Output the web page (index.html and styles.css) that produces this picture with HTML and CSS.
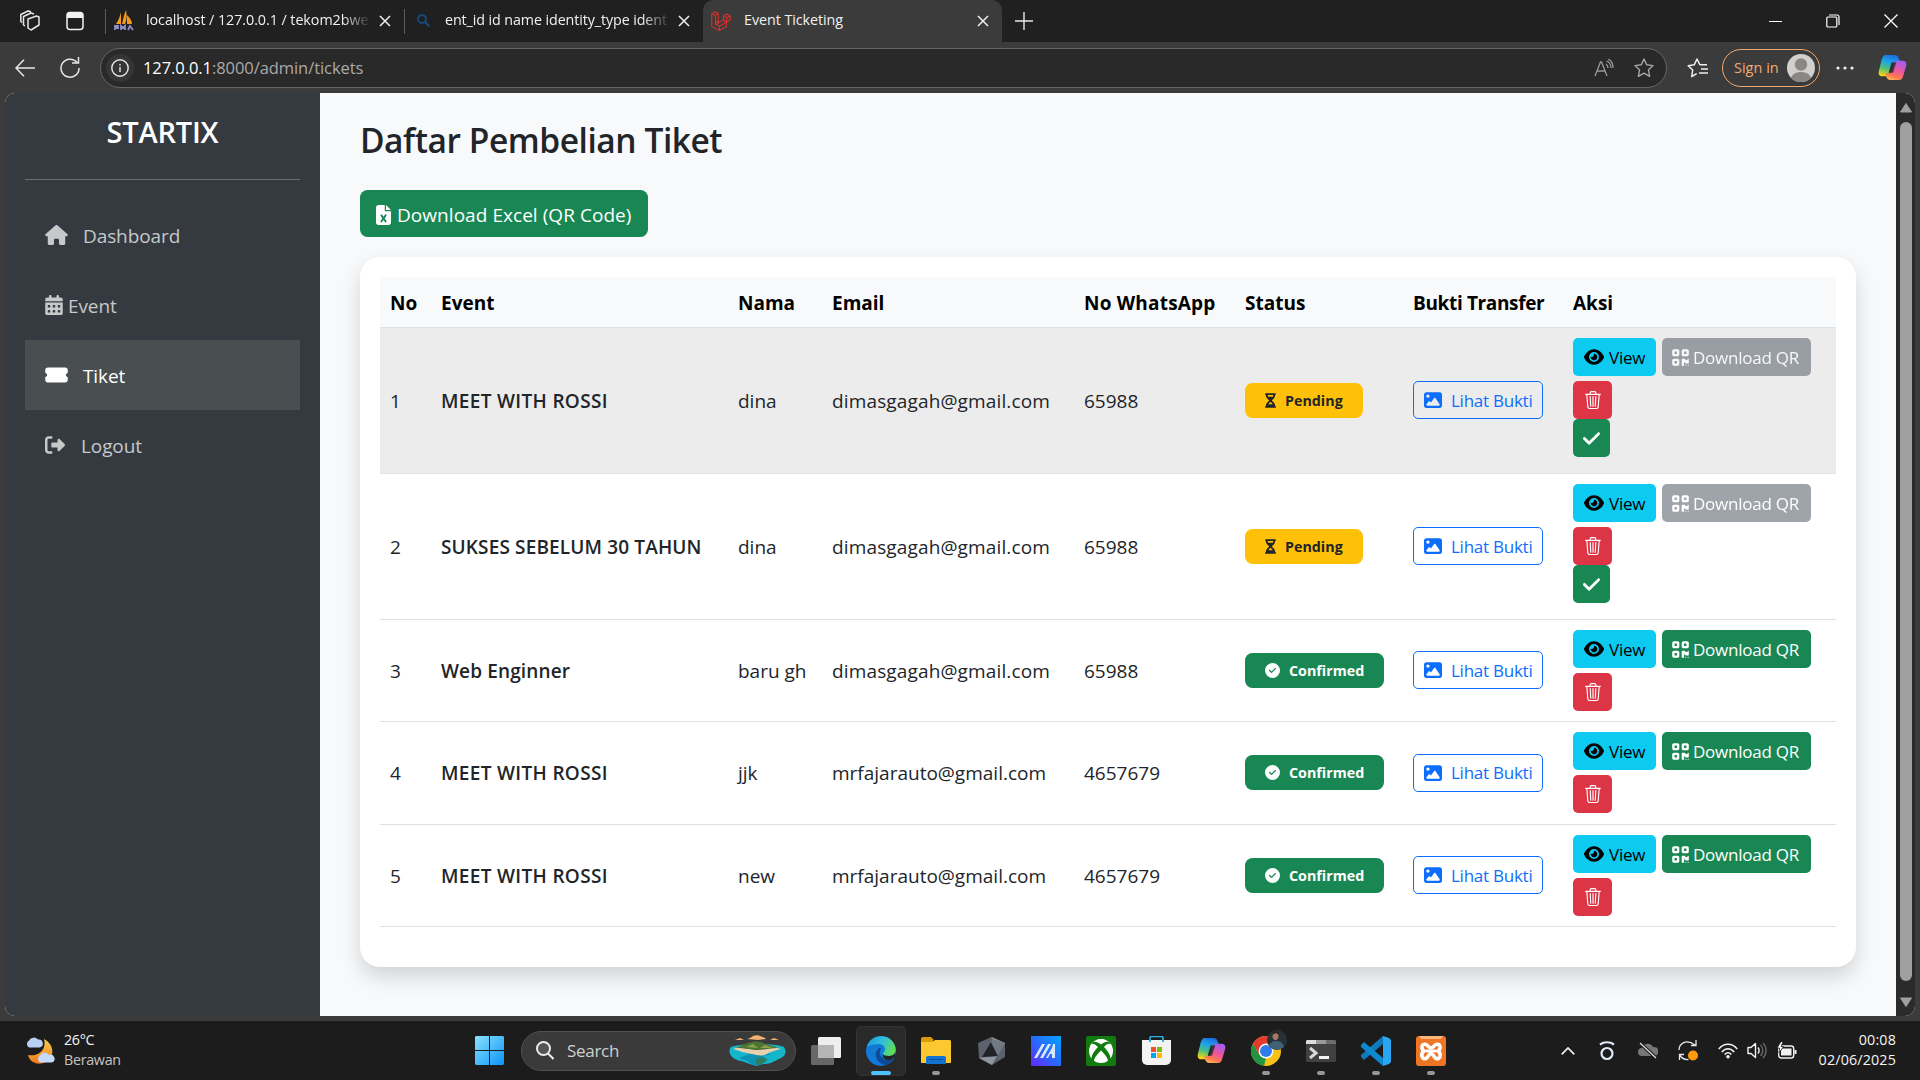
FILE: index.html
```html
<!DOCTYPE html>
<html lang="id">
<head>
<meta charset="utf-8">
<title>Event Ticketing</title>
<link rel="stylesheet" href="styles.css">
</head>
<body>
<svg class="defs" width="0" height="0" aria-hidden="true">
  <symbol id="house" viewBox="0 0 576 512"><path d="M575.8 255.5c0 18-15 32.1-32 32.1h-32l.7 160.2c0 2.7-.2 5.4-.5 8.1V472c0 22.1-17.9 40-40 40H392c-22.1 0-40-17.9-40-40v-88c0-17.7-14.3-32-32-32h-64c-17.7 0-32 14.3-32 32v88c0 22.1-17.9 40-40 40H104c-22.1 0-40-17.9-40-40V287.6H32c-18 0-32-14-32-32.1c0-9 3-17 10-24L266.4 8c7-7 15-8 22-8s15 2 21 7L564.8 231.5c8 7 12 15 11 24z"/></symbol>
  <symbol id="calendar" viewBox="0 0 448 512"><path d="M128 0c17.7 0 32 14.3 32 32V64H288V32c0-17.7 14.3-32 32-32s32 14.3 32 32V64h48c26.5 0 48 21.5 48 48v48H0V112C0 85.5 21.5 64 48 64H96V32c0-17.7 14.3-32 32-32zM0 192H448V464c0 26.5-21.5 48-48 48H48c-26.5 0-48-21.5-48-48V192zm64 80v32c0 8.8 7.2 16 16 16h32c8.8 0 16-7.2 16-16V272c0-8.8-7.2-16-16-16H80c-8.8 0-16 7.2-16 16zm128 0v32c0 8.8 7.2 16 16 16h32c8.8 0 16-7.2 16-16V272c0-8.8-7.2-16-16-16H208c-8.8 0-16 7.2-16 16zm144-16c-8.8 0-16 7.2-16 16v32c0 8.8 7.2 16 16 16h32c8.8 0 16-7.2 16-16V272c0-8.8-7.2-16-16-16H336zM64 400v32c0 8.8 7.2 16 16 16h32c8.8 0 16-7.2 16-16V400c0-8.8-7.2-16-16-16H80c-8.8 0-16 7.2-16 16zm144-16c-8.8 0-16 7.2-16 16v32c0 8.8 7.2 16 16 16h32c8.8 0 16-7.2 16-16V400c0-8.8-7.2-16-16-16H208zm112 16v32c0 8.8 7.2 16 16 16h32c8.8 0 16-7.2 16-16V400c0-8.8-7.2-16-16-16H336c-8.8 0-16 7.2-16 16z"/></symbol>
  <symbol id="ticket" viewBox="0 0 576 512"><path d="M0 128C0 92.7 28.7 64 64 64H512c35.3 0 64 28.7 64 64v64c0 8.8-7.4 15.7-15.7 18.6C541.5 217.1 528 235 528 256s13.5 38.9 32.3 45.4c8.3 2.9 15.7 9.8 15.7 18.6v64c0 35.3-28.7 64-64 64H64c-35.3 0-64-28.7-64-64V320c0-8.8 7.4-15.7 15.7-18.6C34.5 294.9 48 277 48 256s-13.5-38.9-32.3-45.4C7.4 207.7 0 200.8 0 192V128z"/></symbol>
  <symbol id="logout" viewBox="0 0 512 512"><path d="M377.9 105.9L500.7 228.7c7.2 7.2 11.3 17.1 11.3 27.3s-4.1 20.1-11.3 27.3L377.9 406.1c-6.4 6.4-15 9.9-24 9.9c-18.7 0-33.9-15.2-33.9-33.9l0-62.1-128 0c-17.7 0-32-14.3-32-32l0-64c0-17.7 14.3-32 32-32l128 0 0-62.1c0-18.7 15.2-33.9 33.9-33.9c9 0 17.6 3.6 24 9.9zM160 96L96 96c-17.7 0-32 14.3-32 32l0 256c0 17.7 14.3 32 32 32l64 0c17.7 0 32 14.3 32 32s-14.3 32-32 32l-64 0c-53 0-96-43-96-96L0 128C0 75 43 32 96 32l64 0c17.7 0 32 14.3 32 32s-14.3 32-32 32z"/></symbol>
  <symbol id="excel" viewBox="0 0 384 512"><path d="M64 0C28.7 0 0 28.7 0 64V448c0 35.3 28.7 64 64 64H320c35.3 0 64-28.7 64-64V160H256c-17.7 0-32-14.3-32-32V0H64zM256 0V128H384L256 0zM155.7 250.2L192 302.1l36.3-51.9c7.6-10.9 22.6-13.5 33.4-5.9s13.5 22.6 5.9 33.4L221.3 344l46.4 66.2c7.6 10.9 5 25.8-5.9 33.4s-25.8 5-33.4-5.9L192 385.8l-36.3 51.9c-7.6 10.9-22.6 13.5-33.4 5.9s-13.5-22.6-5.9-33.4L162.7 344l-46.4-66.2c-7.6-10.9-5-25.8 5.9-33.4s25.8-5 33.4 5.9z"/></symbol>
  <symbol id="eye" viewBox="0 0 576 512"><path d="M288 32c-80.8 0-145.5 36.8-192.6 80.6C48.6 156 17.3 208 2.5 243.7c-3.3 7.9-3.3 16.7 0 24.6C17.3 304 48.6 356 95.4 399.4C142.5 443.2 207.2 480 288 480s145.5-36.8 192.6-80.6c46.8-43.5 78.1-95.4 93-131.1c3.3-7.9 3.3-16.7 0-24.6c-14.9-35.7-46.2-87.7-93-131.1C433.5 68.8 368.8 32 288 32zM144 256a144 144 0 1 1 288 0 144 144 0 1 1 -288 0zm144-64c0 35.3-28.7 64-64 64c-7.1 0-13.9-1.2-20.3-3.3c-5.5-1.8-11.9 1.6-11.7 7.4c.3 6.9 1.3 13.8 3.2 20.7c13.7 51.2 66.4 81.6 117.6 67.9s81.6-66.4 67.9-117.6c-11.1-41.5-47.8-69.4-88.6-71.1c-5.8-.2-9.2 6.1-7.4 11.7c2.1 6.4 3.3 13.2 3.3 20.3z"/></symbol>
  <symbol id="qr" viewBox="0 0 448 512"><path d="M0 80C0 53.5 21.5 32 48 32h96c26.5 0 48 21.5 48 48v96c0 26.5-21.5 48-48 48H48c-26.5 0-48-21.5-48-48V80zM64 96v64h64V96H64zM0 336c0-26.5 21.5-48 48-48h96c26.5 0 48 21.5 48 48v96c0 26.5-21.5 48-48 48H48c-26.5 0-48-21.5-48-48V336zm64 16v64h64V352H64zM304 32h96c26.5 0 48 21.5 48 48v96c0 26.5-21.5 48-48 48H304c-26.5 0-48-21.5-48-48V80c0-26.5 21.5-48 48-48zm80 64H320v64h64V96zM256 304c0-8.8 7.2-16 16-16h64c8.8 0 16 7.2 16 16s7.2 16 16 16h32c8.8 0 16-7.2 16-16s7.2-16 16-16s16 7.2 16 16v96c0 8.8-7.2 16-16 16H368c-8.8 0-16-7.2-16-16s-7.2-16-16-16s-16 7.2-16 16v64c0 8.8-7.2 16-16 16H272c-8.8 0-16-7.2-16-16V304zM368 480a16 16 0 1 1 0-32 16 16 0 1 1 0 32zm64 0a16 16 0 1 1 0-32 16 16 0 1 1 0 32z"/></symbol>
  <symbol id="check" viewBox="0 0 448 512"><path stroke="currentColor" stroke-width="18" d="M438.6 105.4c12.5 12.5 12.5 32.8 0 45.3l-256 256c-12.5 12.5-32.8 12.5-45.3 0l-128-128c-12.5-12.5-12.5-32.8 0-45.3s32.8-12.5 45.3 0L160 338.7 393.4 105.4c12.5-12.5 32.8-12.5 45.3 0z"/></symbol>
  <symbol id="circle-check" viewBox="0 0 512 512"><path d="M256 512A256 256 0 1 0 256 0a256 256 0 1 0 0 512zM369 209L241 337c-9.4 9.4-24.6 9.4-33.9 0l-64-64c-9.4-9.4-9.4-24.6 0-33.9s24.6-9.4 33.9 0l47 47L335 175c9.4-9.4 24.6-9.4 33.9 0s9.4 24.6 0 33.9z"/></symbol>
  <symbol id="hourglass" viewBox="0 0 384 512"><path fill-rule="evenodd" d="M32 0C14 0 0 14 0 32s14 32 32 32v11c0 42 17 83 47 113l68 68-68 68c-30 30-47 71-47 113v11c-18 0-32 14-32 32s14 32 32 32h320c18 0 32-14 32-32s-14-32-32-32v-11c0-42-17-83-47-113l-68-68 68-68c30-30 47-71 47-113V64c18 0 32-14 32-32S370 0 352 0zM96 75V64h192v11c0 19-6 37-16 53H112c-10-16-16-34-16-53zm16 309c4-5 8-10 13-15l67-68 67 68c5 5 10 10 13 15z"/></symbol>
  <symbol id="image" viewBox="0 0 512 448"><path fill-rule="evenodd" d="M64 0C29 0 0 29 0 64v320c0 35 29 64 64 64h384c35 0 64-29 64-64V64c0-35-29-64-64-64zM112 64a48 48 0 1 1 0 96 48 48 0 0 1 0-96zm212 106c-5-7-12-10-20-10s-16 4-20 11l-87 127-26-33c-5-6-12-9-19-9s-14 3-19 9l-64 80c-5 7-6 16-2 24s12 15 21 15h336c9 0 17-5 21-13s4-17-1-25z"/></symbol>
  <symbol id="trash" viewBox="0 0 16 16"><path d="M6.5 1h3a.5.5 0 0 1 .5.5v1H6v-1a.5.5 0 0 1 .5-.5M11 2.5v-1A1.5 1.5 0 0 0 9.5 0h-3A1.5 1.5 0 0 0 5 1.5v1H1.500a.5.5 0 0 0 0 1h.538l.853 10.66A2 2 0 0 0 4.885 16h6.23a2 2 0 0 0 1.994-1.84l.853-10.66h.538a.5.5 0 0 0 0-1zm1.958 1-.846 10.58a1 1 0 0 1-.997.92h-6.23a1 1 0 0 1-.997-.92L3.042 3.5zm-7.487 1a.5.5 0 0 1 .528.47l.5 8.5a.5.5 0 0 1-.998.06L5 5.03a.5.5 0 0 1 .47-.53Zm5.058 0a.5.5 0 0 1 .47.53l-.5 8.5a.5.5 0 1 1-.998-.06l.5-8.5a.5.5 0 0 1 .528-.47M8 4.5a.5.5 0 0 1 .5.5v8.5a.5.5 0 0 1-1 0V5a.5.5 0 0 1 .5-.5"/></symbol>
  <symbol id="x" viewBox="0 0 12 12"><path d="M1 1l10 10M11 1L1 11" fill="none" stroke="currentColor" stroke-width="1.5"/></symbol>
  <symbol id="copilot" viewBox="0 0 30 28">
    <path d="M8 1h9c3 0 4 2 5 5l1 3h-5c-3 0-4 2-5 5l-2 7c-.6 2-1 2-2 2H4c-3 0-4-3-3-6L4 5c.7-2 2-4 4-4z" fill="url(#cpA)"/>
    <path d="M22 27h-9c-3 0-4-2-5-5l-.6-2H11c2 0 3-2 4-5l2-6c.7-2 2-2 3-2h6c3 0 4 3 3 6l-3 10c-.7 2-2 4-4 4z" fill="url(#cpB)"/>
    <path d="M14 8.500h5l-3.500 11h-4.500z" fill="#2a2a2c" opacity=".8"/>
  </symbol>
  <linearGradient id="cpA" x1=".6" y1="0" x2=".3" y2="1"><stop offset="0" stop-color="#1b6fe0"/><stop offset=".35" stop-color="#1fa5e8"/><stop offset=".65" stop-color="#4cc27a"/><stop offset="1" stop-color="#f5d415"/></linearGradient>
  <linearGradient id="cpB" x1=".7" y1="0" x2=".3" y2="1"><stop offset="0" stop-color="#a35cf0"/><stop offset=".5" stop-color="#f0569a"/><stop offset=".8" stop-color="#ff7a4c"/><stop offset="1" stop-color="#ffb357"/></linearGradient>
</svg>

<header class="titlebar">
  <svg class="t-work" width="20" height="22" viewBox="0 0 20 22" fill="none" stroke="#e6e6e6" stroke-width="1.500" stroke-linejoin="round"><path d="M8 9l8.500-3 2.500 1v8l-8 5-3-2zM5 16l-1.500-1V6.500L11 3l3 1M2 12.500L.8 11.500V4.500L8 1l3 .8"/></svg>
  <svg class="t-vert" width="18" height="20" viewBox="0 0 18 20"><rect x="1" y="1.500" width="16" height="17" rx="3" fill="none" stroke="#f2f2f2" stroke-width="1.500"/><path d="M1 7V4a3 3 0 0 1 3-3h10a3 3 0 0 1 3 3v3z" fill="#f2f2f2"/></svg>
  <i class="t-sep"></i>
  <div class="tab tab-one">
    <svg width="21" height="22" viewBox="0 0 21 22"><path d="M7 2v12H2C4 11 6 7 7 2zM12 0c1 5 1 10-1 14H8c1-5 2-9 4-14zM13 5c3 3 5 6 5 9h-5z" fill="#f39a1e"/><path d="M1 20v-4h3v2H1M7 20v-4l2 2 2-2v4M14 20l2-4 3 4" fill="none" stroke="#8d8fc6" stroke-width="1.800"/></svg>
    <span class="tab-label fade">localhost / 127.0.0.1 / tekom2bwe</span>
    <svg class="x" width="12" height="12"><use href="#x"/></svg>
  </div>
  <i class="t-sep"></i>
  <div class="tab tab-two">
    <svg width="13" height="13" viewBox="0 0 13 13" fill="none" stroke="#174a7c" stroke-width="2"><circle cx="5" cy="5" r="4"/><path d="M8 8l4.500 4.500"/></svg>
    <span class="tab-label fade">ent_id id name identity_type ident</span>
    <svg class="x" width="12" height="12"><use href="#x"/></svg>
  </div>
  <div class="tab tab-active">
    <svg width="20" height="20" viewBox="0 0 20 20" fill="none" stroke="#d5302a" stroke-width="1.100" stroke-linejoin="round"><path d="M.8 2.500L4 .7l3.300 1.800v9L4 9.800M.8 2.500L4 4.300l3.300-1.800M.8 2.500v13L8.500 19.400l7-4V11l3.700-2V5L15.700 3 12.500 5v4l-8 4.500V4.300M12.500 5l3.200 1.800L19.200 5M15.700 6.800V11l-3.200-2M15.500 11l-7 4.200v4.200M8.500 15.200l-4-2"/></svg>
    <span class="tab-label">Event Ticketing</span>
    <svg class="x" width="12" height="12"><use href="#x"/></svg>
  </div>
  <svg class="t-plus" width="18" height="18" viewBox="0 0 18 18" stroke="#e8e8e8" stroke-width="1.400"><path d="M9 0v18M0 9h18"/></svg>
  <div class="win-ctl">
    <svg width="13" height="13" viewBox="0 0 13 13" stroke="#fff"><path d="M0 6.500h13"/></svg>
    <svg width="14" height="14" viewBox="0 0 14 14" fill="none" stroke="#fff" stroke-width="1.200"><rect x=".8" y="3" width="10" height="10" rx="1"/><path d="M3 1h8a2 2 0 0 1 2 2v8"/></svg>
    <svg width="14" height="14" viewBox="0 0 14 14" stroke="#fff" stroke-width="1.300"><path d="M.5.5l13 13M13.500.5l-13 13"/></svg>
  </div>
</header>

<div class="toolbar">
  <svg width="20" height="18" viewBox="0 0 20 18" fill="none" stroke="#e8e8e8" stroke-width="1.500"><path d="M9 .8L1 9l8 8.200M1 9h19"/></svg>
  <svg class="tb-reload" width="20" height="21" viewBox="0 0 20 21" fill="none" stroke="#e8e8e8" stroke-width="1.500"><path d="M17 5.500A9 9 0 1 0 19 11M18.500 0v6H12"/></svg>
  <div class="urlbar">
    <span class="info"><svg width="18" height="18" viewBox="0 0 18 18"><circle cx="9" cy="9" r="8.200" fill="none" stroke="#e8e8e8" stroke-width="1.400"/><path d="M9 8v5M9 5v1.500" stroke="#e8e8e8" stroke-width="1.400"/></svg></span>
    <span class="url"><b>127.0.0.1</b>:8000/admin/tickets</span>
    <svg width="20" height="18" viewBox="0 0 20 18" fill="none" stroke="#999" stroke-width="1.300"><path d="M1 17L6.500 3h1L13 17M3 12h8M12 5c1.500 1 2 2.500 2 4M12.500 2C15.500 3 17 6 17 9M14 0c3.500 1.500 5 5 5 9"/></svg>
    <svg class="tb-star" width="20" height="20" viewBox="0 0 20 20" fill="none" stroke="#a5a5a5" stroke-width="1.400" stroke-linejoin="round"><path d="M10 1l2.700 5.800 6.300.8-4.600 4.300 1.200 6.400L10 15.200l-5.600 3.100 1.200-6.400L1 7.600l6.300-.8z"/></svg>
  </div>
  <svg class="tb-fav" width="21" height="20" viewBox="0 0 21 20" fill="none" stroke="#f0f0f0" stroke-width="1.500" stroke-linejoin="round"><path d="M13 7l-3-6-2.800 5.800-6 .9 4.500 4.300-1 6.500 5-2.800M13 6.800h7M14 11h7M12 15h9"/></svg>
  <div class="signin"><span>Sign in</span>
    <svg width="28" height="28" viewBox="0 0 28 28"><circle cx="14" cy="14" r="14" fill="#d2d0ce"/><circle cx="14" cy="10.500" r="6.200" fill="#8a8886"/><path d="M4 24c2-8 18-8 20 0a14 14 0 0 1-20 0z" fill="#8a8886"/></svg></div>
  <svg class="tb-dots" width="18" height="4" viewBox="0 0 18 4"><circle cx="2" cy="2" r="1.600"/><circle cx="9" cy="2" r="1.600"/><circle cx="16" cy="2" r="1.600"/></svg>
  <svg class="tb-copilot" width="29" height="27"><use href="#copilot"/></svg>
</div>

<div class="viewport">
  <aside class="sidebar">
    <h2 class="brand">STARTIX</h2>
    <nav class="menu">
      <a class="item"><svg width="23" height="20"><use href="#house"/></svg><span>Dashboard</span></a>
      <a class="item item-event"><svg width="18" height="20"><use href="#calendar"/></svg><span>Event</span></a>
      <a class="item active"><svg width="23" height="20"><use href="#ticket"/></svg><span>Tiket</span></a>
      <a class="item item-out"><svg width="20" height="20"><use href="#logout"/></svg><span>Logout</span></a>
    </nav>
  </aside>
  <main class="content">
    <h1 class="title">Daftar Pembelian Tiket</h1>
    <a class="btn-excel"><svg width="15" height="20"><use href="#excel"/></svg><span>Download Excel (QR Code)</span></a>
    <section class="card">
      <table class="tickets">
        <colgroup><col class="c-no"><col class="c-event"><col class="c-nama"><col class="c-email"><col class="c-wa"><col class="c-status"><col class="c-bukti"><col></colgroup>
        <thead><tr><th>No</th><th>Event</th><th>Nama</th><th>Email</th><th class="th-wa">No WhatsApp</th><th>Status</th><th class="th-bukti">Bukti Transfer</th><th>Aksi</th></tr></thead>
        <tbody>
          <tr class="tall hover"><td>1</td><td class="ev">MEET WITH ROSSI</td><td>dina</td><td class="em">dimasgagah@gmail.com</td><td>65988</td>
            <td><span class="badge pending"><svg width="11" height="15"><use href="#hourglass"/></svg>Pending</span></td>
            <td><a class="btn proof"><svg width="18" height="16"><use href="#image"/></svg>Lihat Bukti</a></td>
            <td><div class="acts"><a class="btn view"><svg width="20" height="18"><use href="#eye"/></svg>View</a><a class="btn qr off"><svg width="17" height="19"><use href="#qr"/></svg>Download QR</a><a class="btn del"><svg width="18" height="18"><use href="#trash"/></svg></a></div><a class="btn ok"><svg width="17" height="19"><use href="#check"/></svg></a></td></tr>
          <tr class="tall"><td>2</td><td class="ev ev-long">SUKSES SEBELUM 30 TAHUN</td><td>dina</td><td class="em">dimasgagah@gmail.com</td><td>65988</td>
            <td><span class="badge pending"><svg width="11" height="15"><use href="#hourglass"/></svg>Pending</span></td>
            <td><a class="btn proof"><svg width="18" height="16"><use href="#image"/></svg>Lihat Bukti</a></td>
            <td><div class="acts"><a class="btn view"><svg width="20" height="18"><use href="#eye"/></svg>View</a><a class="btn qr off"><svg width="17" height="19"><use href="#qr"/></svg>Download QR</a><a class="btn del"><svg width="18" height="18"><use href="#trash"/></svg></a></div><a class="btn ok"><svg width="17" height="19"><use href="#check"/></svg></a></td></tr>
          <tr><td>3</td><td class="ev ev-long">Web Enginner</td><td>baru gh</td><td class="em">dimasgagah@gmail.com</td><td>65988</td>
            <td><span class="badge confirmed"><svg width="15" height="15"><use href="#circle-check"/></svg>Confirmed</span></td>
            <td><a class="btn proof"><svg width="18" height="16"><use href="#image"/></svg>Lihat Bukti</a></td>
            <td><div class="acts"><a class="btn view"><svg width="20" height="18"><use href="#eye"/></svg>View</a><a class="btn qr"><svg width="17" height="19"><use href="#qr"/></svg>Download QR</a><a class="btn del"><svg width="18" height="18"><use href="#trash"/></svg></a></div></td></tr>
          <tr class="plus"><td>4</td><td class="ev">MEET WITH ROSSI</td><td>jjk</td><td>mrfajarauto@gmail.com</td><td>4657679</td>
            <td><span class="badge confirmed"><svg width="15" height="15"><use href="#circle-check"/></svg>Confirmed</span></td>
            <td><a class="btn proof"><svg width="18" height="16"><use href="#image"/></svg>Lihat Bukti</a></td>
            <td><div class="acts"><a class="btn view"><svg width="20" height="18"><use href="#eye"/></svg>View</a><a class="btn qr"><svg width="17" height="19"><use href="#qr"/></svg>Download QR</a><a class="btn del"><svg width="18" height="18"><use href="#trash"/></svg></a></div></td></tr>
          <tr><td>5</td><td class="ev">MEET WITH ROSSI</td><td>new</td><td>mrfajarauto@gmail.com</td><td>4657679</td>
            <td><span class="badge confirmed"><svg width="15" height="15"><use href="#circle-check"/></svg>Confirmed</span></td>
            <td><a class="btn proof"><svg width="18" height="16"><use href="#image"/></svg>Lihat Bukti</a></td>
            <td><div class="acts"><a class="btn view"><svg width="20" height="18"><use href="#eye"/></svg>View</a><a class="btn qr"><svg width="17" height="19"><use href="#qr"/></svg>Download QR</a><a class="btn del"><svg width="18" height="18"><use href="#trash"/></svg></a></div></td></tr>
        </tbody>
      </table>
    </section>
  </main>
  <div class="scroll">
    <svg width="12" height="10" viewBox="0 0 12 10"><path d="M6 .5L11.500 9h-11z" fill="#9f9f9f" stroke="#9f9f9f" stroke-linejoin="round"/></svg>
    <i class="thumb"></i>
    <svg width="12" height="10" viewBox="0 0 12 10"><path d="M6 9.500L11.500 1h-11z" fill="#9f9f9f" stroke="#9f9f9f" stroke-linejoin="round"/></svg>
  </div>
</div>

<footer class="taskbar">
  <div class="weather">
    <svg width="30" height="28" viewBox="0 0 30 28"><defs><linearGradient id="moon" x1="0" y1="0" x2="0" y2="1"><stop offset="0" stop-color="#f8cf4a"/><stop offset="1" stop-color="#f07a1c"/></linearGradient></defs><path d="M19 3c12 6 11 22-3 24.500-6 1-12-3-13-8.500 10 2 19-5 16-16z" fill="url(#moon)"/><path d="M4 11.500a4 4 0 0 1 0-7 5.500 5.500 0 0 1 9-1 4 4 0 0 1 1.500 8z" fill="#b9cff5"/><path d="M15 26.500a4 4 0 0 1 0-7 5 5 0 0 1 9-.5 4 4 0 0 1 3 7.500z" fill="#c5dafb"/></svg>
    <div class="two"><span>26°C</span><span class="dim">Berawan</span></div>
  </div>
  <div class="apps">
    <svg class="start" width="29" height="29" viewBox="0 0 29 29"><defs><linearGradient id="win" x1="0" y1="0" x2="1" y2="1"><stop offset="0" stop-color="#8ae2fb"/><stop offset="1" stop-color="#0b94fa"/></linearGradient></defs><path d="M1 0h13v14H0V1zM15 0h13l1 1v13H15zM0 15h14v14H1l-1-1zM15 15h14v13l-1 1H15z" fill="url(#win)"/></svg>
    <div class="search">
      <svg width="18" height="19" viewBox="0 0 18 19" stroke="#ececec" stroke-width="2"><circle cx="7.500" cy="7.500" r="6.500" fill="#555"/><path d="M12 12.500l5.500 5.500"/></svg>
      <span>Search</span>
      <svg class="island" width="57" height="32" viewBox="0 0 57 32"><path d="M2 12c10-4 43-4 53 0 3 5 2 9-5 12-5 2-8 5-14 5-5 0-7 3-12 1-5-1-7-3-12-4C2 24-2 17 2 12z" fill="#15b5cc"/><path d="M10 23l8 3 6 4h6l7-3-2-6 8-2H20z" fill="#0c93b4"/><path d="M4 14c6-2 12-4 17-5l5-1 8 1c6 2 12 3 18 5-7 2-12 3-16 6-5 1-9 0-13-1-7-1-12-3-19-5z" fill="#e9cfae"/><path d="M7 13c6-3 10-5 16-6 5-1 10 0 14 2 4 1 8 2 12 4-8 0-13 2-20 2S16 13 7 13z" fill="#4d7434"/><path d="M17 12l7-3 5 4zM31 13l5-3 8 3z" fill="#8aa34a"/><path d="M18 4l3-1 3-2c2-1 6-1 7 0l5 2 1 1-8 1zM6 5l5-2 4 2zM41 5l4-2 5 2z" fill="#f1b273"/><path d="M26 25l5-3 8 2-6 5-5 1z" fill="#2f7a63"/></svg>
    </div>
    <span class="app"><svg width="30" height="28" viewBox="0 0 30 28"><rect x="7" y="0" width="23" height="21" rx="1.500" fill="#eee"/><rect x="0" y="8" width="23" height="20" rx="1.500" fill="#707070" opacity=".9"/><path d="M7 8h16v13H7z" fill="#b5b5b5"/></svg></span>
    <span class="app app-on"><svg width="30" height="30" viewBox="0 0 30 30"><defs><linearGradient id="e1" x1="0" y1=".2" x2="1" y2=".6"><stop offset="0" stop-color="#1c9be0"/><stop offset=".5" stop-color="#2fc0dc"/><stop offset="1" stop-color="#62e04e"/></linearGradient></defs><circle cx="15" cy="15" r="15" fill="#1279d6"/><path d="M1 11C4-2 24-4 29 10c2 6-1 10-6 10-4 0-6-1-6-2 0-2 2-2 2-5 0-2-2-5-6-5C8 8 4 9 1 11z" fill="url(#e1)"/><path d="M13 12c-7 6-2 16 7 17 3-1 6-3 8-6-6 3-13 0-14-5-1-3 1-4 1-6z" fill="#0c4c97"/><path d="M17 18c0 1 2 2 6 2 3 0 5-1 6.500-4l-.5 5-4 3c-5 1-9-2-8-6z" fill="#232526"/></svg><i class="run wide"></i></span>
    <span class="app"><svg width="30" height="27" viewBox="0 0 30 27"><path d="M0 2a2 2 0 0 1 2-2h8l3 3h-1v5H0z" fill="#dc9a08"/><path d="M0 5h11l3-2h15l1 1v22H0z" fill="#fcc82f"/><path d="M5 27v-6a2 2 0 0 1 2-2h16a2 2 0 0 1 2 2v6z" fill="#1173cf"/><path d="M8.500 22.500h13" stroke="#0a4f9c"/></svg><i class="run"></i></span>
    <span class="app"><svg width="27" height="28" viewBox="0 0 27 28"><path d="M13.500 0L27 6v14l-13 8L1 21 0 6z" fill="#5b626b"/><path d="M13.500 0L27 6l-9 4zM1 21l13 7 5-9z" fill="#8e969f"/><path d="M13 5l7 14-16 1z" fill="#202328"/><path d="M13 5l7 14 7-13-12-4z" fill="#717982"/></svg></span>
    <span class="app"><svg width="30" height="30" viewBox="0 0 30 30"><defs><linearGradient id="ma" x1="1" y1="0" x2="0" y2="1"><stop offset="0" stop-color="#04a2ff"/><stop offset=".5" stop-color="#286cfa"/><stop offset="1" stop-color="#6523ff"/></linearGradient></defs><path d="M0 0h30v30H0z" fill="url(#ma)"/><path d="M3 22l8-14h3L6 22zM9 22l8-14h3l-8 14zM15 22l6-10 1-4h2v14h-3v-4h-2l-2 4z" fill="#dbe9ff"/></svg></span>
    <span class="app"><svg width="30" height="30" viewBox="0 0 30 30"><rect width="30" height="30" rx="2" fill="#107c10"/><circle cx="15" cy="15" r="12" fill="#fff"/><path d="M7 6c3-1 6 1 8 2.500C17 7 20 5 23 6l2 2c-2-1-5 0-7 3 4 4 7 9 6.500 12.500L22 25.500c0-4-4-8-7-11-3 3-7 7-7 11l-2.500-2C5 20 8 15 12 11 9 8 7 7 5 8z" fill="#107c10"/><path d="M10 4.500c2 0 4 1 5 1.800 1-.8 3-1.800 5-1.800-3-2-7-2-10 0z" fill="#fff"/></svg></span>
    <span class="app"><svg width="29" height="29" viewBox="0 0 29 29"><path d="M8 6V2a1.500 1.500 0 0 1 1.500-1.500h10A1.500 1.500 0 0 1 21 2v4" fill="none" stroke="#28b3e4" stroke-width="1.600"/><path d="M0 4h29v20a5 5 0 0 1-5 5H5a5 5 0 0 1-5-5z" fill="#f3f3f3"/><path d="M7 4h2v2H7zM20 4h2v2h-2z" fill="#28b3e4"/><path d="M9 11h5v5H9z" fill="#f25022"/><path d="M15 11h5v5h-5z" fill="#7fba00"/><path d="M9 17h5v5H9z" fill="#00a4ef"/><path d="M15 17h5v5h-5z" fill="#ffb900"/></svg></span>
    <span class="app"><svg width="29" height="27"><use href="#copilot"/></svg></span>
    <span class="app"><svg class="chrome" width="36" height="36" viewBox="0 0 36 36"><circle cx="15" cy="21" r="15" fill="#fbc116"/><path d="M2 13.500L8.500 25l6.500 3-2 8A15 15 0 0 1 2 13.500z" fill="#229342"/><path d="M2 13.500A15 15 0 0 1 28 13.500H15L8.500 25z" fill="#e33b2e"/><circle cx="15" cy="21" r="7.400" fill="#fff"/><circle cx="15" cy="21" r="6" fill="#2f7bea"/><circle cx="26" cy="10" r="10" fill="#273238"/><path d="M18 15c3-4 5-4 8-4s6 2 7 6a10 10 0 0 1-14 0z" fill="#3f6279"/><ellipse cx="24.500" cy="6" rx="3" ry="4" fill="#a87862"/><path d="M21 5c1-5 7-5 7 0l-3-2z" fill="#2a1f1c"/></svg><i class="run"></i></span>
    <span class="app"><svg width="30" height="22" viewBox="0 0 30 22"><rect width="30" height="22" rx="1.500" fill="#414141"/><path d="M1 0h9v4H0V1z" fill="#ddd"/><path d="M10 0h10v4H10z" fill="#9a9a9a"/><path d="M20 0h9l1 1v3H20z" fill="#6d6d6d"/><path d="M4 8l6 5-6 5" fill="none" stroke="#d8d8d8" stroke-width="3"/><path d="M13 17.500h10" stroke="#f2f2f2" stroke-width="3"/></svg><i class="run"></i></span>
    <span class="app"><svg width="30" height="30" viewBox="0 0 30 30"><path d="M22 8L3 24l-3-3v-2L22 0z" fill="#1079bd"/><path d="M22 22L3 6 0 9v2l22 19z" fill="#0d89d1"/><path d="M22 0l6 2 2 2v22l-2 2-6 2z" fill="#2aa5f2"/></svg><i class="run"></i></span>
    <span class="app"><svg width="30" height="30" viewBox="0 0 30 30"><rect width="30" height="30" rx="3" fill="#ee7524"/><path d="M3 0h24l-2 3H5z" fill="#f9b77c"/><path d="M10 8.500C5 7 5 13 8 15c-4 3-2 9 2 7.500 2-1 3-5 5-5s3 4 5 5c4 1.500 6-4.500 2-7.500 3-2 3-8-2-6.500-2 1-3 3.500-5 3.500S12 9.500 10 8.500z" fill="none" stroke="#fff" stroke-width="3.600"/><path d="M10 15h10" stroke="#fff" stroke-width="3"/></svg><i class="run"></i></span>
  </div>
  <div class="tray">
    <svg width="14" height="8" viewBox="0 0 14 8" fill="none" stroke="#f2f2f2" stroke-width="1.700"><path d="M.7 7.300L7 1l6.300 6.300"/></svg>
    <svg class="tr-o" width="18" height="20" viewBox="0 0 18 20" fill="none" stroke="#dfe9f8" stroke-width="2.200"><circle cx="9" cy="12.500" r="5.500"/><path d="M2 3.500c4-3 10-3 14 0"/></svg>
    <svg class="tr-cloud" width="20" height="17" viewBox="0 0 20 17"><path d="M4 14a4 4 0 0 1 0-8 6 6 0 0 1 11-1 4.500 4.500 0 0 1 2 9z" fill="#777"/><path d="M2 1l16 15" stroke="#1c1c1c" stroke-width="3.500"/><path d="M2 1l16 15" stroke="#ddd" stroke-width="1.300"/></svg>
    <svg class="tr-sync" width="21" height="21" viewBox="0 0 21 21" fill="none" stroke="#e8e8e8" stroke-width="1.300"><path d="M1 10C1 4 8-2 17 5M18 0v5.500h-5M6 14.500H1.500V20M1.500 15c3 4 6 5 9 4.500"/><circle cx="15" cy="15.500" r="5" fill="#ff9a0c" stroke="none"/></svg>
    <svg class="tr-wifi" width="20" height="16" viewBox="0 0 20 16" fill="none" stroke="#f2f2f2" stroke-width="1.600"><path d="M.8 6C6-.3 14-.3 19.200 6M3.800 9c3.600-4.300 8.800-4.300 12.400 0M6.700 11.500c2-2.300 4.600-2.300 6.600 0"/><circle cx="10" cy="13.700" r="1.800" fill="#f2f2f2" stroke="none"/></svg>
    <svg class="tr-vol" width="20" height="17" viewBox="0 0 20 17" fill="none" stroke="#f2f2f2" stroke-width="1.400" stroke-linejoin="round"><path d="M1 5.500v6h3l4.500 4v-14l-4.500 4zM11 5.500c1.500 2 1.500 4 0 6"/><path d="M13.500 3c3 3 3 8 0 11M16 1c4 4 4 11 0 15" stroke="#666"/></svg>
    <svg class="tr-bat" width="20" height="17" viewBox="0 0 20 17"><rect x="1.700" y="4" width="15" height="12" rx="2.500" fill="none" stroke="#f2f2f2" stroke-width="1.400"/><rect x="4" y="6.500" width="10.500" height="7" fill="#f2f2f2"/><path d="M17.500 8h2v4h-2z" fill="#f2f2f2"/><path d="M4-.5L0 6h2.500L2 11l4.500-6.500H4.200L6-.5z" fill="#fff" stroke="#1c1c1c" stroke-width=".8"/></svg>
    <div class="two clock"><span>00:08</span><span>02/06/2025</span></div>
  </div>
</footer>
</body>
</html>
```
FILE: styles.css
```css
* { box-sizing: border-box; }
body {
  margin: 0; width: 1920px; height: 1080px; overflow: hidden;
  display: flex; flex-direction: column;
  background: #3b3b3b; color: #212529;
  font-family: "Open Sans", "Noto Sans", sans-serif; font-size: 19px;
}
.defs { display: block; width: 0; height: 0; position: absolute; }
svg { flex: none; display: block; fill: currentColor; }
svg[fill="none"] { fill: none; }
h1, h2 { margin: 0; }

/* browser title bar */
.titlebar { flex: none; height: 42px; background: #202020; color: #f0f0f0; display: flex; align-items: center; font-size: 14.3px; }
.t-work { margin-left: 20px; }
.t-vert { margin-left: 26px; }
.t-sep { width: 1px; height: 25px; background: #5c5c5c; margin-left: 21px; }
.tab { display: flex; align-items: center; height: 42px; padding-bottom: 1px; }
.tab-label { white-space: nowrap; overflow: hidden; line-height: 24px; padding-bottom: 2px; }
.tab-one { width: 298px; padding-left: 8px; }
.tab-one .tab-label { width: 223px; margin-left: 11px; letter-spacing: -.05px; }
.tab-two { width: 298px; padding-left: 12px; }
.tab-two .tab-label { width: 224px; margin-left: 15px; letter-spacing: -.1px; }
.tab-one + .t-sep { margin-left: 0; }
.fade { -webkit-mask-image: linear-gradient(90deg, #000 88%, transparent 101%); mask-image: linear-gradient(90deg, #000 88%, transparent 101%); }
.tab .x { margin-left: 10px; }
.tab-two .x { margin-left: 9px; }
.tab-active { width: 299px; padding-left: 8px; background: #3b3b3b; border-radius: 10px 10px 0 0; }
.tab-active .tab-label { margin-left: 13px; width: 223px; letter-spacing: -.05px; }
.t-plus { margin-left: 13px; }
.win-ctl { margin-left: auto; display: flex; align-items: center; gap: 44px; padding-right: 22px; }

/* browser address bar */
.toolbar { flex: none; height: 51px; display: flex; align-items: center; padding-left: 15px; }
.tb-reload { margin-left: 25px; }
.urlbar { margin-left: 20px; width: 1567px; height: 40px; border: 1px solid #666; border-radius: 20px; background: #292929; display: flex; align-items: center; padding: 0 12px 0 5px; color: #a9a9a9; }
.info { width: 28px; height: 28px; border-radius: 50%; background: #353535; display: grid; place-items: center; }
.url { flex: 1; margin-left: 9px; font-size: 16.5px; letter-spacing: -.07px; }
.url b { font-weight: 400; color: #fff; }
.tb-star { margin-left: 20px; }
.tb-fav { margin-left: 20px; }
.signin { margin-left: 14px; width: 98px; height: 38px; border: 1.500px solid #f0a870; border-radius: 19px; display: flex; align-items: center; justify-content: space-between; padding: 0 4px 0 11px; color: #f5a970; font-size: 14.5px; white-space: nowrap; }
.tb-dots { margin-left: 16px; color: #f0f0f0; }
.tb-copilot { margin-left: 24px; }

/* page */
.viewport { flex: none; height: 923px; margin-left: 5px; width: 1910px; display: flex; border-radius: 10px; overflow: hidden; background: #f8f9fa; }
.sidebar { width: 315px; padding: 0 20px; background: #343a40; color: #c6c8ca; }
.brand { height: 87px; padding-top: 17px; line-height: 44px; text-align: center; color: #fff; font-size: 29px; font-weight: 600; letter-spacing: -.2px; border-bottom: 1px solid #6a6f70; }
.menu { margin-top: 20px; }
.item { display: flex; align-items: center; height: 70px; padding-left: 20px; }
.item span { margin-left: 15px; padding-top: 2px; letter-spacing: -.1px; }
.item.item-event span { margin-left: 5px; }
.item-out span { margin-left: 16px; }
.item.active { background: #494e51; color: #fff; }
.content { flex: 1; padding: 24px 40px 0; }
.title { height: 45px; line-height: 46px; font-size: 33.5px; font-weight: 600; letter-spacing: -.45px; white-space: nowrap; }
.btn-excel { display: flex; align-items: center; gap: 6px; margin-top: 28px; width: 288px; height: 47px; padding: 2px 0 0 16px; border-radius: 7.5px; background: #198754; color: #fff; white-space: nowrap; letter-spacing: .05px; }
.card { margin-top: 20px; height: 710px; padding: 20px; border-radius: 20px; background: #fff; box-shadow: 0 10px 20px rgba(0, 0, 0, .15); }
.tickets { width: 1456px; table-layout: fixed; border-collapse: separate; border-spacing: 0; white-space: nowrap; }
.c-no { width: 51px; } .c-event { width: 297px; } .c-nama { width: 94px; } .c-email { width: 252px; }
.c-wa { width: 161px; } .c-status { width: 168px; } .c-bukti { width: 160px; }
th { height: 51px; padding: 2px 10px 0; text-align: left; font-weight: 700; color: #000; background: #f8f9fa; border-bottom: 1px solid #dee2e6; }
.th-wa { letter-spacing: .2px; }
.th-bukti { letter-spacing: -.35px; }
td { height: 102px; padding: 0 10px; border-bottom: 1px solid #dee2e6; vertical-align: middle; }
td:nth-last-child(2) { padding-bottom: 1px; }
.tall td { height: 146px; }
.tall td:last-child { padding-bottom: 1px; }
.plus td { height: 103px; }
.plus td:nth-last-child(-n+3) { padding-bottom: 1px; }
.hover td { background: #ececec; }
.ev { font-weight: 600; letter-spacing: .33px; }
.ev-long { letter-spacing: .14px; }
.em { letter-spacing: .14px; }
.badge { display: inline-flex; align-items: center; height: 35px; border-radius: 7.5px; padding: 0 20px; gap: 9px; font-size: 14.3px; font-weight: 700; vertical-align: middle; }
.pending { width: 118px; background: #ffc107; }
.confirmed { width: 139px; background: #198754; color: #fff; }
.btn { display: inline-flex; align-items: center; height: 38px; padding-left: 10px; border-radius: 5px; font-size: 17px; letter-spacing: -.25px; color: #fff; vertical-align: middle; }
.proof { width: 130px; border: 1px solid #0d6efd; color: #0d6efd; gap: 9px; }
.acts { display: flex; flex-wrap: wrap; gap: 5px 6px; }
.view { width: 83px; padding-left: 11px; gap: 5px; background: #0dcaf0; color: #000; }
.qr { width: 149px; gap: 4px; background: #198754; }
.qr.off { background: #6c757d; opacity: .65; }
.del { width: 39px; padding-left: 11px; background: #dc3545; }
.ok { display: flex; width: 37px; margin-bottom: 5px; background: #198754; }
.scroll { width: 19px; background: #2b2b2b; display: flex; flex-direction: column; align-items: center; padding: 10px 0 9px; gap: 9px; }
.thumb { width: 12px; height: 859px; border-radius: 6px; background: #9f9f9f; margin-bottom: 7px; }

/* taskbar */
.taskbar { flex: none; margin-top: 5px; height: 59px; background: #1c1c1c; color: #f4f4f4; display: flex; align-items: center; font-size: 14.3px; }
.weather { display: flex; align-items: center; width: 475px; padding-left: 25px; gap: 9px; padding-bottom: 2px; }
.two { display: flex; flex-direction: column; line-height: 20px; letter-spacing: -.3px; }
.dim { color: #c4c4c4; }
.apps { display: flex; align-items: center; }
.search { width: 275px; height: 40px; margin: 0 5px 0 17px; padding: 0 9px 0 14px; border-radius: 20px; border: 1px solid #515151; background: #3a3a3a; display: flex; align-items: center; color: #d0d0d0; font-size: 17px; }
.search span { margin-left: 13px; letter-spacing: -.3px; }
.island { margin-left: auto; }
.app { position: relative; width: 50px; height: 50px; margin-right: 5px; border-radius: 5px; display: grid; place-items: center; }
.app-on { background: #2a2a2a; border: 1px solid #343434; }
.run { position: absolute; left: 21px; bottom: 1px; width: 8px; height: 4px; border-radius: 2px; background: #969696; }
.run.wide { left: 14px; bottom: 0; width: 20px; background: #4cc2ff; }
.chrome { position: relative; left: 3px; top: -3px; }
.tray { margin-left: auto; display: flex; align-items: center; padding-right: 24px; }
.tr-o { margin-left: 23px; } .tr-cloud { margin-left: 22px; } .tr-sync { margin-left: 20px; }
.tr-wifi { margin-left: 19px; } .tr-vol { margin-left: 9px; } .tr-bat { margin-left: 10px; }
.clock { width: 99px; padding-bottom: 2px; text-align: right; white-space: nowrap; letter-spacing: .15px; }
```
